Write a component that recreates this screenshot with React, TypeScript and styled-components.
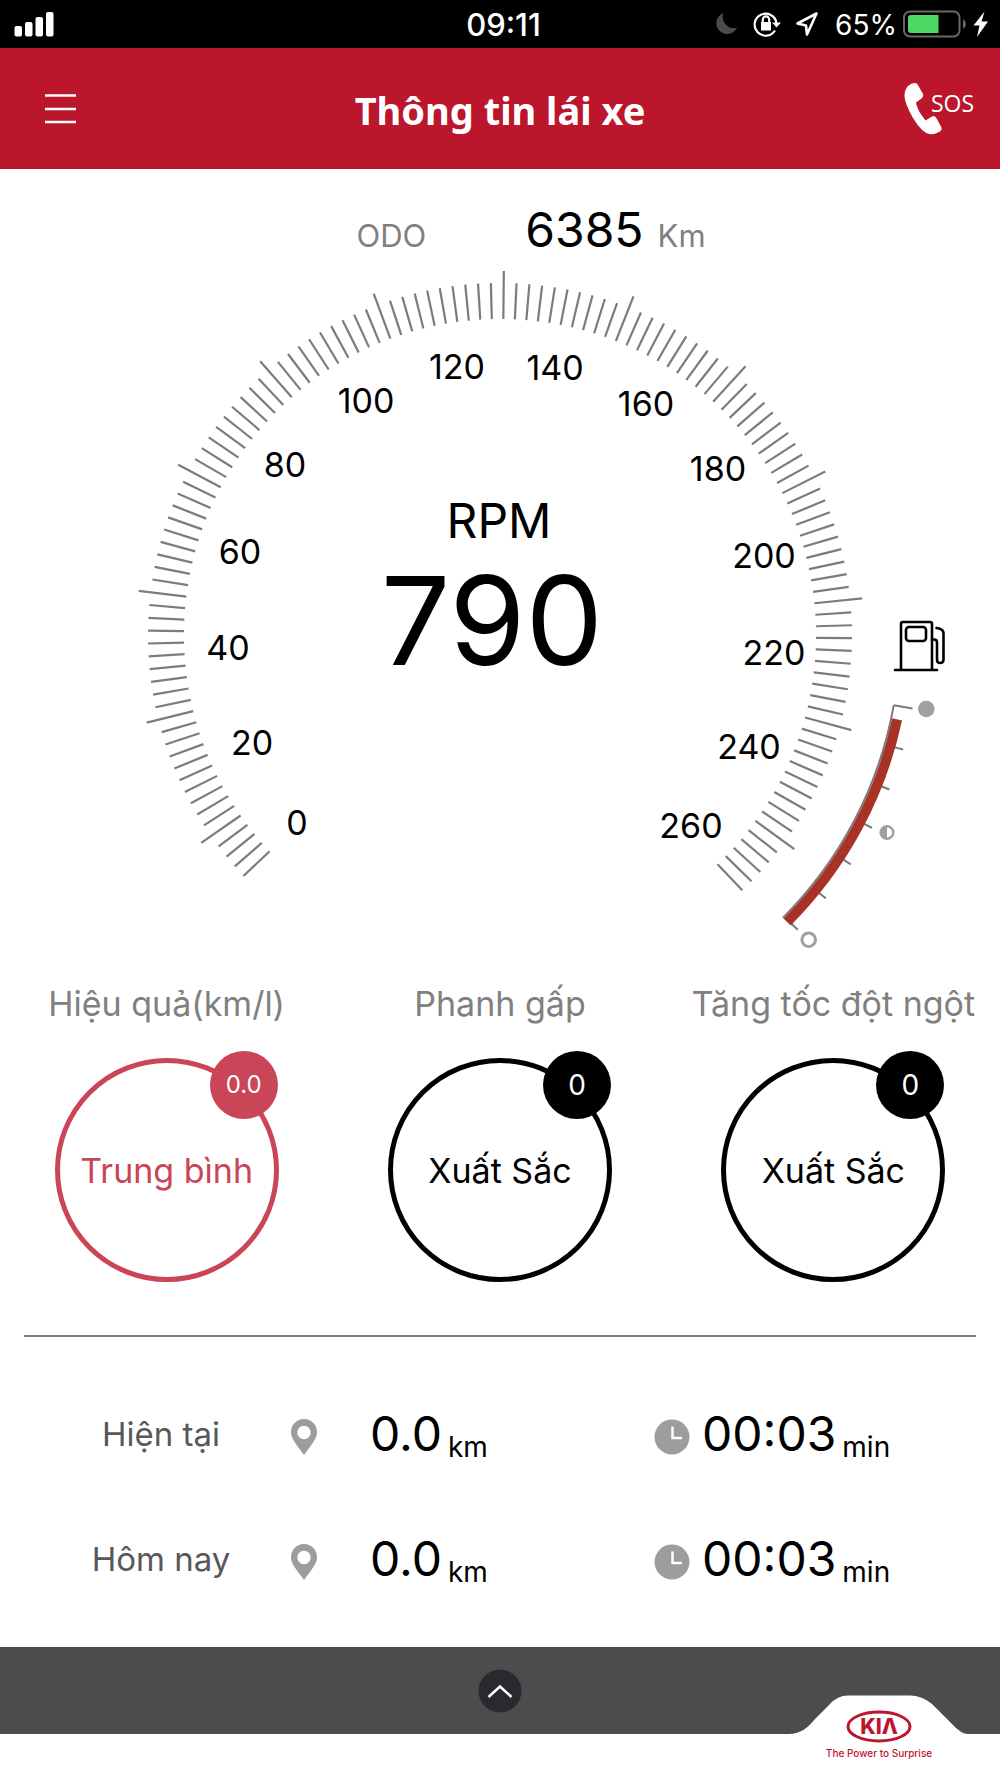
import React from "react";
import styled, { createGlobalStyle } from "styled-components";

const GlobalStyle = createGlobalStyle`
  * { box-sizing: border-box; }
  body {
    margin: 0;
    background: #fff;
    color: #000;
    font-family: Inter, "Liberation Sans", sans-serif;
  }
  button { border: 0; padding: 0; background: none; color: inherit; font: inherit; cursor: pointer; }
  svg { display: block; }
`;

const Screen = styled.div`
  display: flex;
  flex-direction: column;
  min-height: 100vh;
`;

const StatusBar = styled.div`
  display: grid;
  grid-template-columns: 1fr auto 1fr;
  align-items: center;
  height: 48px;
  padding: 0 11px 0 14px;
  background: #000;
  color: #fff;
  font-size: 28px;
`;

const Clock = styled.time`
  padding: 2px 0 0 4px;
  font-size: 31px;
  font-weight: 500;
  line-height: 46px;
`;

const StatusIcons = styled.div`
  display: flex;
  justify-content: flex-end;
  align-items: center;
`;

const BatteryLevel = styled.span`
  padding: 2px 6px 0 16px;
  line-height: 46px;
`;

const Header = styled.header`
  display: grid;
  grid-template-columns: 1fr auto 1fr;
  align-items: center;
  height: 121px;
  padding: 0 26px;
  background: #bb162b;
  color: #fff;
`;

const Title = styled.h1`
  margin: 0;
  padding-top: 2px;
  font: 700 38px/56px "Noto Sans", sans-serif;
`;

const SosButton = styled.button`
  display: flex;
  justify-self: end;
  align-items: center;
`;

const SosText = styled.span`
  margin: 0 0 12px -11px;
  font: 400 23px/28px "Open Sans", sans-serif;
`;

const MenuButton = styled.button`
  justify-self: start;
  margin-left: 19px;
`;

const Odometer = styled.div`
  display: flex;
  justify-content: center;
  align-items: baseline;
  padding: 36px 0 0 62px;
  line-height: 49px;
`;

const OdoUnit = styled.span`
  color: #808080;
  font-size: 31px;
`;

const OdoValue = styled.span`
  margin: 0 14px 0 99px;
  font-size: 48px;
`;

const Dial = styled.svg`
  width: 100%;
  height: auto;
`;

const Scores = styled.section`
  display: grid;
  grid-template-columns: repeat(3, 1fr);
  padding-top: 22px;
`;

const Score = styled.div`
  display: flex;
  flex-direction: column;
  align-items: center;
`;

const ScoreName = styled.h2`
  margin: 0 0 32px;
  color: #808080;
  font-size: 34px;
  font-weight: 400;
  line-height: 44px;
  white-space: nowrap;
`;

const Ring = styled.div<{ $color: string }>`
  position: relative;
  display: flex;
  justify-content: center;
  align-items: center;
  width: 224px;
  height: 224px;
  border: 5px solid ${(p) => p.$color};
  border-radius: 50%;
  color: ${(p) => p.$color};
  font-size: 34px;
`;

const Badge = styled.span<{ $color: string; $size: number }>`
  position: absolute;
  top: -12px;
  right: -4px;
  width: 68px;
  border-radius: 50%;
  background: ${(p) => p.$color};
  color: #fff;
  font-size: ${(p) => p.$size}px;
  line-height: 68px;
  text-align: center;
`;

const Divider = styled.hr`
  margin: 53px 24px 0;
  border: 0;
  border-top: 2px solid #7c7c7c;
  width: calc(100% - 48px);
`;

const Trips = styled.section`
  display: flex;
  flex-direction: column;
  gap: 61px;
  padding: 65px 0 56px;
`;

const Trip = styled.div`
  display: grid;
  grid-template-columns: 29% 36% 1fr;
  align-items: center;
  line-height: 64px;
`;

const TripName = styled.span`
  padding-left: 32px;
  color: #58585a;
  font-size: 33px;
  text-align: center;
`;

const Reading = styled.div`
  display: flex;
  align-items: center;

  svg { margin-top: 6px; }

  & + & { padding-left: 4px; }
`;

const Figure = styled.span<{ $gap: number }>`
  margin-left: ${(p) => p.$gap}px;
  font-size: 48px;
`;

const Unit = styled.span`
  margin-left: 6px;
  padding-top: 26px;
  font-size: 28px;
  line-height: 38px;
`;

const Footer = styled.footer`
  position: relative;
  display: flex;
  justify-content: center;
  align-items: center;
  height: 87px;
  background: #4c4c4c;
`;

const UpButton = styled.button`
  border-radius: 50%;
`;

const Brand = styled.svg`
  position: absolute;
  top: 48px;
  right: 32px;
`;

const GREY = "#7c7c7c";
const CX = 500;
const CY = 375;

function polar(radius: number, degrees: number): [number, number] {
  const a = (degrees * Math.PI) / 180;
  return [CX + radius * Math.cos(a), CY + radius * Math.sin(a)];
}

function Tick({ from, to, angle }: { from: number; to: number; angle: number }) {
  const [x1, y1] = polar(from, angle);
  const [x2, y2] = polar(to, angle);
  return <line x1={x1} y1={y1} x2={x2} y2={y2} />;
}

function arc(radius: number, start: number, end: number) {
  const [x1, y1] = polar(radius, start);
  const [x2, y2] = polar(radius, end);
  return `M${x1} ${y1}A${radius} ${radius} 0 0 1 ${x2} ${y2}`;
}

const dialTicks = Array.from({ length: 130 }, (_, i) => ({
  angle: -223.2 + (i * 269.7) / 129,
  major: i % 10 === 4,
}));

const dialLabels: [number, number, number][] = [
  [0, 297, 563],
  [20, 252, 483],
  [40, 228, 388],
  [60, 240, 292],
  [80, 285, 205],
  [100, 366, 141],
  [120, 457, 107],
  [140, 555, 108],
  [160, 646, 144],
  [180, 718, 209],
  [200, 764, 296],
  [220, 774, 393],
  [240, 749, 487],
  [260, 691, 566],
];

function Speedometer() {
  return (
    <Dial viewBox="0 0 1000 700" role="img" aria-label="RPM 790">
      <g stroke={GREY} strokeWidth="2.2">
        {dialTicks.map((t) => (
          <Tick key={t.angle} from={316} to={t.major ? 364 : 352} angle={t.angle} />
        ))}
      </g>
      <g fontSize="34" textAnchor="middle">
        {dialLabels.map(([value, x, y]) => (
          <text key={value} x={x} y={y + 12}>{value}</text>
        ))}
      </g>
      <text x="499" y="278" fontSize="48" textAnchor="middle">RPM</text>
      <text x="492" y="405" fontSize="123" textAnchor="middle">790</text>

      <g fill="none" stroke="#000" strokeWidth="2.6" strokeLinejoin="round" strokeLinecap="round">
        <path d="M895 410H937M901 410V364Q901 362 903 362H930Q932 362 932 364V410" />
        <rect x="906" y="367" width="20" height="14" rx="3" />
        <path d="M932 379.500H934Q937 379.500 937 382.500V399.500Q937 403 940 403Q943.500 403 943.500 399.500V373Q943.500 369 936.500 368" />
      </g>
      <g fill="none" stroke={GREY} strokeWidth="2">
        <path d={arc(400, 10.1, 45)} />
        <Tick from={400} to={419} angle={10.1} />
        {[1, 2, 3, 4, 5, 6].map((i) => (
          <Tick key={i} from={410} to={419} angle={10.1 + i * 5.77} />
        ))}
      </g>
      <path d={arc(406, 12, 45)} fill="none" stroke="#a93226" strokeWidth="10" />
      <circle cx="926.300" cy="449" r="8.300" fill="#a0a0a0" />
      <circle cx="887" cy="572.500" r="6.300" fill="#fff" stroke="#a0a0a0" strokeWidth="2.600" />
      <path d="M887 566.500A6 6 0 0 0 887 578.500Z" fill="#a0a0a0" />
      <circle cx="808.700" cy="679.700" r="6.800" fill="#fff" stroke="#a0a0a0" strokeWidth="3" />
    </Dial>
  );
}

function SignalIcon() {
  return (
    <svg width="40" height="25" viewBox="0 0 40 25" fill="#fff" aria-hidden="true">
      <rect x="0.500" y="14" width="7.500" height="10.500" rx="2" />
      <rect x="11" y="10" width="7.500" height="14.500" rx="2" />
      <rect x="21.500" y="5" width="7.500" height="19.500" rx="2" />
      <rect x="32" y="0" width="7.500" height="24.500" rx="2" />
    </svg>
  );
}

function StatusGlyphs() {
  return (
    <svg width="104" height="28" viewBox="0 0 104 28" fill="none" aria-hidden="true">
      <path d="M8.500 3A10.800 10.800 0 1 0 22 17.500A11 11 0 0 1 8.500 3Z" fill="#4b4b4b" />
      <g stroke="#fff" strokeWidth="2.200">
        <path d="M60 20.500A11 11 0 1 1 61.500 13" />
        <path d="M47.800 12.500V9.500A3.200 3.200 0 0 1 54.200 9.500V12.500" />
      </g>
      <path d="M57 12.500H66L61.500 17.500ZM46 12H56V20.500H46Z" fill="#fff" />
      <path d="M101.500 3.500L82.500 13.500L91 15.500L92 24.500Z" stroke="#fff" strokeWidth="2.600" strokeLinejoin="round" />
    </svg>
  );
}

function BatteryIcon() {
  return (
    <svg width="86" height="28" viewBox="0 0 86 28" fill="none" aria-hidden="true">
      <rect x="1" y="1.500" width="55.500" height="25" rx="6" stroke="#686868" strokeWidth="2" />
      <path d="M8 5H35.500V23H8Q5 23 5 20V8Q5 5 8 5Z" fill="#4cd964" />
      <path d="M60 9Q63 11 63 14Q63 17 60 19Z" fill="#686868" />
      <path d="M81.500 1.500L70.500 15.500H76.500L74 27L85 11.500H78.500Z" fill="#fff" />
    </svg>
  );
}

function PhoneIcon() {
  return (
    <svg width="38" height="53" viewBox="0 0 38 53" fill="#fff" aria-hidden="true">
      <path d="M4 4Q8 0.500 11.500 1Q13 1 14.500 4L19 12Q20 14.500 17.500 16.500L12 20.500Q13 28 21.500 38.500L28 34.500Q30.500 33.500 32 35.500L37 44.500Q38.500 48 36 49.500Q31 52.500 26 52.300Q18 51 9 36Q0 20 0.500 13Q1 7 4 4Z" />
    </svg>
  );
}

function PinIcon() {
  return (
    <svg width="28" height="38" viewBox="0 0 28 38" aria-hidden="true">
      <path fillRule="evenodd" fill="#9d9da0" d="M14 1A13 13 0 0 1 27 14.500C27 19.500 23 25 14 37C5 25 1 19.500 1 14.500A13 13 0 0 1 14 1ZM14 7.800A6.700 6.700 0 1 0 14 21.200A6.700 6.700 0 1 0 14 7.800Z" />
    </svg>
  );
}

function ClockIcon() {
  return (
    <svg width="36" height="36" viewBox="0 0 36 36" aria-hidden="true">
      <circle cx="18" cy="18" r="17.500" fill="#9d9da0" />
      <path d="M18.500 7.500V19H28" fill="none" stroke="#fff" strokeWidth="2.500" />
    </svg>
  );
}

const RED = "#c94557";
const scores = [
  { name: "Hiệu quả(km/l)", grade: "Trung bình", count: "0.0", size: 24, color: RED },
  { name: "Phanh gấp", grade: "Xuất Sắc", count: "0", size: 28, color: "#000" },
  { name: "Tăng tốc đột ngột", grade: "Xuất Sắc", count: "0", size: 28, color: "#000" },
];

const trips = [
  { name: "Hiện tại", distance: "0.0", duration: "00:03" },
  { name: "Hôm nay", distance: "0.0", duration: "00:03" },
];

export default function App() {
  return (
    <Screen>
      <GlobalStyle />
      <StatusBar>
        <SignalIcon />
        <Clock>09:11</Clock>
        <StatusIcons>
          <StatusGlyphs />
          <BatteryLevel>65%</BatteryLevel>
          <BatteryIcon />
        </StatusIcons>
      </StatusBar>
      <Header>
        <MenuButton aria-label="Menu">
          <svg width="31" height="30" viewBox="0 0 31 30" stroke="#fff" strokeWidth="2.500">
            <path d="M0 1.500H31M0 15H31M0 28H31" />
          </svg>
        </MenuButton>
        <Title>Thông tin lái xe</Title>
        <SosButton>
          <PhoneIcon />
          <SosText>SOS</SosText>
        </SosButton>
      </Header>
      <main>
        <Odometer>
          <OdoUnit>ODO</OdoUnit>
          <OdoValue>6385</OdoValue>
          <OdoUnit>Km</OdoUnit>
        </Odometer>
        <Speedometer />
        <Scores>
          {scores.map((s) => (
            <Score key={s.name}>
              <ScoreName>{s.name}</ScoreName>
              <Ring $color={s.color}>
                {s.grade}
                <Badge $color={s.color} $size={s.size}>{s.count}</Badge>
              </Ring>
            </Score>
          ))}
        </Scores>
        <Divider />
        <Trips>
          {trips.map((t) => (
            <Trip key={t.name}>
              <TripName>{t.name}</TripName>
              <Reading>
                <PinIcon />
                <Figure $gap={52}>{t.distance}</Figure>
                <Unit>km</Unit>
              </Reading>
              <Reading>
                <ClockIcon />
                <Figure $gap={12}>{t.duration}</Figure>
                <Unit>min</Unit>
              </Reading>
            </Trip>
          ))}
        </Trips>
      </main>
      <Footer>
        <UpButton aria-label="Mở rộng">
          <svg width="44" height="44" viewBox="0 0 44 44">
            <circle cx="22" cy="22" r="21.500" fill="#2a2930" />
            <path d="M10.500 28L22 17.500L33.500 28" fill="none" stroke="#fff" strokeWidth="2.500" />
          </svg>
        </UpButton>
        <Brand width="180" height="70" viewBox="0 0 180 70" role="img" aria-label="KIA The Power to Surprise">
          <path d="M0 39C14 39 20 32 27 24L41 10Q49 0.500 60 0.500H122Q134 0.500 144 9L164 29Q173 39 180 39V70H0Z" fill="#fff" />
          <ellipse cx="91" cy="31.500" rx="31" ry="14.500" fill="none" stroke="#bb162b" strokeWidth="3" />
          <text x="91" y="39" fontSize="21" fontWeight="800" fill="#bb162b" textAnchor="middle">KIΛ</text>
          <text x="91" y="62" fontSize="10" fontWeight="500" fill="#bb162b" textAnchor="middle">The Power to Surprise</text>
        </Brand>
      </Footer>
    </Screen>
  );
}
